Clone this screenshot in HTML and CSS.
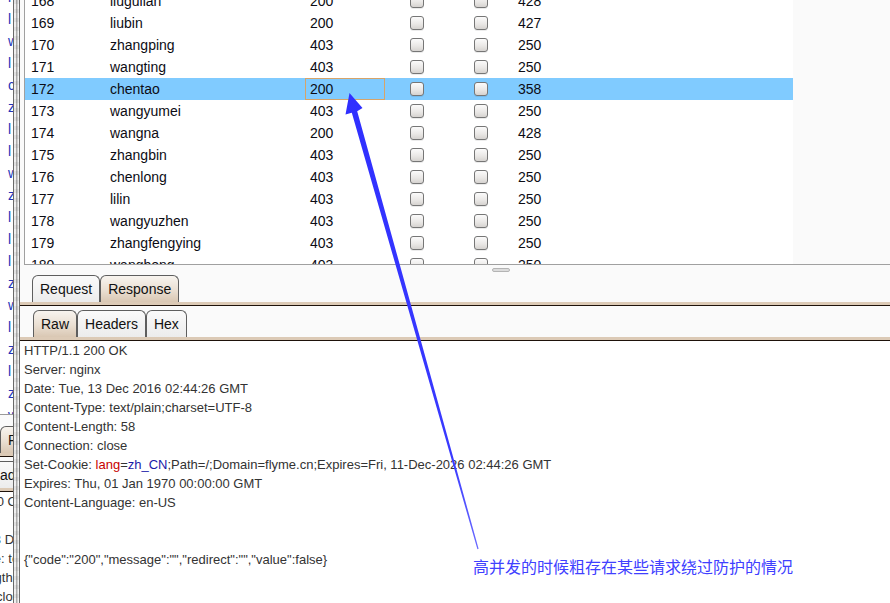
FILE: index.html
```html
<!DOCTYPE html>
<html>
<head>
<meta charset="utf-8">
<link rel="stylesheet" href="styles.css">
</head>
<body>
<div class="app">
  <div class="side">
    <div class="side-list">
      <div class="sl">l</div><div class="sl">l</div><div class="sl">w</div><div class="sl">l</div>
      <div class="sl">c</div><div class="sl">z</div><div class="sl">l</div><div class="sl">l</div>
      <div class="sl">w</div><div class="sl">z</div><div class="sl">l</div><div class="sl">l</div>
      <div class="sl">l</div><div class="sl">z</div><div class="sl">w</div><div class="sl">l</div>
      <div class="sl">z</div><div class="sl">l</div><div class="sl">z</div><div class="sl">w</div>
    </div>
    <div class="hsplit"></div>
    <div class="tabs side-tabs"><span class="tab sel">Request</span></div>
    <div class="bar"></div>
    <div class="tab-gap"></div>
    <div class="tabs side-tabs2"><span class="tab">Headers</span></div>
    <div class="bar"></div>
    <div class="side-text">
      <div class="ln">HTTP/1.1 200 OK</div>
      <div class="ln">Server: nginx</div>
      <div class="ln">Date: Tue, 13 Dec 2016 02:44:26 GMT</div>
      <div class="ln">Content-Type: text/plain;charset=UTF-8</div>
      <div class="ln">Content-Length: 58</div>
      <div class="ln">Connection: close</div>
    </div>
  </div>
  <div class="splitter"></div>
  <div class="main">
    <div class="table-wrap">
      <div class="table">
        <div class="row"><span class="c-num">168</span><span class="c-name">liuguilan</span><span class="c-st">200</span><span class="c-cb"><i class="cb"></i></span><span class="c-cb"><i class="cb"></i></span><span class="c-len">428</span></div>
        <div class="row"><span class="c-num">169</span><span class="c-name">liubin</span><span class="c-st">200</span><span class="c-cb"><i class="cb"></i></span><span class="c-cb"><i class="cb"></i></span><span class="c-len">427</span></div>
        <div class="row"><span class="c-num">170</span><span class="c-name">zhangping</span><span class="c-st">403</span><span class="c-cb"><i class="cb"></i></span><span class="c-cb"><i class="cb"></i></span><span class="c-len">250</span></div>
        <div class="row"><span class="c-num">171</span><span class="c-name">wangting</span><span class="c-st">403</span><span class="c-cb"><i class="cb"></i></span><span class="c-cb"><i class="cb"></i></span><span class="c-len">250</span></div>
        <div class="row sel"><span class="c-num">172</span><span class="c-name">chentao</span><span class="c-st focus">200</span><span class="c-cb"><i class="cb"></i></span><span class="c-cb"><i class="cb"></i></span><span class="c-len">358</span></div>
        <div class="row"><span class="c-num">173</span><span class="c-name">wangyumei</span><span class="c-st">403</span><span class="c-cb"><i class="cb"></i></span><span class="c-cb"><i class="cb"></i></span><span class="c-len">250</span></div>
        <div class="row"><span class="c-num">174</span><span class="c-name">wangna</span><span class="c-st">200</span><span class="c-cb"><i class="cb"></i></span><span class="c-cb"><i class="cb"></i></span><span class="c-len">428</span></div>
        <div class="row"><span class="c-num">175</span><span class="c-name">zhangbin</span><span class="c-st">403</span><span class="c-cb"><i class="cb"></i></span><span class="c-cb"><i class="cb"></i></span><span class="c-len">250</span></div>
        <div class="row"><span class="c-num">176</span><span class="c-name">chenlong</span><span class="c-st">403</span><span class="c-cb"><i class="cb"></i></span><span class="c-cb"><i class="cb"></i></span><span class="c-len">250</span></div>
        <div class="row"><span class="c-num">177</span><span class="c-name">lilin</span><span class="c-st">403</span><span class="c-cb"><i class="cb"></i></span><span class="c-cb"><i class="cb"></i></span><span class="c-len">250</span></div>
        <div class="row"><span class="c-num">178</span><span class="c-name">wangyuzhen</span><span class="c-st">403</span><span class="c-cb"><i class="cb"></i></span><span class="c-cb"><i class="cb"></i></span><span class="c-len">250</span></div>
        <div class="row"><span class="c-num">179</span><span class="c-name">zhangfengying</span><span class="c-st">403</span><span class="c-cb"><i class="cb"></i></span><span class="c-cb"><i class="cb"></i></span><span class="c-len">250</span></div>
        <div class="row"><span class="c-num">180</span><span class="c-name">wanghong</span><span class="c-st">403</span><span class="c-cb"><i class="cb"></i></span><span class="c-cb"><i class="cb"></i></span><span class="c-len">250</span></div>
      </div>
    </div>
    <div class="hsplit"><span class="grip"></span></div>
    <div class="tabs tabs1"><span class="tab">Request</span><span class="tab sel">Response</span></div>
    <div class="bar"></div>
    <div class="tab-gap"></div>
    <div class="tabs tabs2"><span class="tab sel">Raw</span><span class="tab">Headers</span><span class="tab">Hex</span></div>
    <div class="bar"></div>
    <div class="resp">
      <div class="ln">HTTP/1.1 200 OK</div>
      <div class="ln">Server: nginx</div>
      <div class="ln">Date: Tue, 13 Dec 2016 02:44:26 GMT</div>
      <div class="ln">Content-Type: text/plain;charset=UTF-8</div>
      <div class="ln">Content-Length: 58</div>
      <div class="ln">Connection: close</div>
      <div class="ln">Set-Cookie: <span class="ck">lang</span>=<span class="cv">zh_CN</span>;Path=/;Domain=flyme.cn;Expires=Fri, 11-Dec-2026 02:44:26 GMT</div>
      <div class="ln">Expires: Thu, 01 Jan 1970 00:00:00 GMT</div>
      <div class="ln">Content-Language: en-US</div>
      <div class="ln">&nbsp;</div>
      <div class="ln">&nbsp;</div>
      <div class="ln">{"code":"200","message":"","redirect":"","value":false}</div>
    </div>
  </div>
</div>
<svg class="arrow" width="890" height="603" viewBox="0 0 890 603">
  <defs>
    <linearGradient id="ag" x1="0" y1="0" x2="0" y2="1">
      <stop offset="0" stop-color="#2f2fff"/>
      <stop offset="0.8" stop-color="#3a3aff"/>
      <stop offset="1" stop-color="#6a6aff"/>
    </linearGradient>
  </defs>
  <polygon fill="url(#ag)" points="349.5,93 362.5,108 357.2,111.2 478.6,548.8 477.4,549.2 351.8,112.8 345.5,114.5"/>
</svg>
<div class="note">高并发的时候粗存在某些请求绕过防护的情况</div>
</body>
</html>
```
FILE: styles.css
```css
* { box-sizing: border-box; }
html, body {
  margin: 0;
  padding: 0;
  width: 890px;
  height: 603px;
  overflow: hidden;
  background: #fafafa;
  font-family: "Liberation Sans", Arial, sans-serif;
}
.app {
  display: flex;
  width: 890px;
  height: 603px;
}

/* left clipped pane */
.side {
  width: 13px;
  flex: none;
  overflow: hidden;
  display: flex;
  flex-direction: column;
  background: #fafafa;
}
.side-list {
  height: 415px;
  flex: none;
  background: #fff;
  border-bottom: 1px solid #9a9a9a;
  overflow: hidden;
}
.sl {
  height: 22px;
  line-height: 22px;
  font-size: 14px;
  padding-left: 8px;
  color: #2233b8;
}
.sl:first-child { margin-top: -14px; }
.side-tabs { padding-left: 0; }
.side-tabs2 { margin-left: -26px; padding-left: 0; }
.side .hsplit { height: 11px; }
.side-text {
  flex: 1;
  background: #fff;
  font-size: 13px;
  line-height: 19px;
  color: #333;
  margin-left: -77px;
  width: 90px;
  overflow: hidden;
}
.ln { white-space: pre; height: 19px; }

/* vertical splitter */
.splitter {
  width: 7px;
  flex: none;
  border-left: 1px solid #6a6a6a;
  border-right: 1px solid #6a6a6a;
  background:
    repeating-linear-gradient(to bottom, rgba(0,0,0,0.06) 0 4px, rgba(0,0,0,0) 4px 9px),
    linear-gradient(to right, #e6e6e6, #ffffff 25%, #9c9c9c 55%, #ffffff 85%, #e0e0e0);
}

/* main pane */
.main {
  flex: 1;
  display: flex;
  flex-direction: column;
  background: #fafafa;
  min-width: 0;
}
.table-wrap {
  height: 265px;
  flex: none;
  margin-left: 4px;
  border-left: 1px solid #a0a0a0;
  border-bottom: 1px solid #a0a0a0;
  overflow: hidden;
  background: #fafafa;
}
.table {
  width: 768px;
  background: #fff;
  margin-top: -10px;
}
.row {
  display: grid;
  grid-template-columns: 80px 200px 80px 64px 64px 280px;
  height: 22px;
  line-height: 22px;
  font-size: 14px;
  color: #0c0c14;
}
.row.sel { background: #80cbff; }
.c-num { padding-left: 6px; }
.c-name, .c-st, .c-len { padding-left: 5px; white-space: nowrap; }
.c-st.focus { box-shadow: inset 0 0 0 1px #d6a46a; }
.c-cb {
  display: flex;
  align-items: center;
  justify-content: center;
}
.cb {
  display: block;
  width: 14px;
  height: 14px;
  border: 1px solid #767676;
  border-radius: 3px;
  background: linear-gradient(#fbfbfb, #e9e7e5 60%, #d6d3d0);
  box-shadow: 0 1px 0 rgba(0,0,0,0.08);
}

.hsplit {
  height: 10px;
  flex: none;
  background: #fafafa;
}
.grip {
  display: block;
  width: 18px;
  height: 4px;
  margin: 3px 0 0 472px;
  border: 1px solid #b4b4b4;
  border-radius: 2px;
  background: #dcdcdc;
}

.tabs {
  display: flex;
  height: 27px;
  flex: none;
  align-items: flex-end;
}
.tabs1 { padding-left: 12px; }
.tabs2 { padding-left: 13px; }
.tab {
  height: 27px;
  line-height: 26px;
  font-size: 14px;
  color: #111;
  padding: 0 7px;
  border: 1px solid #5e5e5e;
  border-bottom: none;
  border-radius: 6px 6px 0 0;
  background: linear-gradient(#fafafa, #ececec);
  white-space: nowrap;
}
.tab.sel {
  background: linear-gradient(#f8f4ef, #eadfd2 55%, #d9c7b3);
}
.bar {
  height: 4px;
  flex: none;
  background: #dccab6;
  border-bottom: 1px solid #1e120a;
}
.tab-gap {
  height: 4px;
  flex: none;
  background: #fafafa;
}

.resp {
  flex: 1;
  background: #fff;
  padding-left: 4px;
  font-size: 13px;
  line-height: 19px;
  color: #333;
}
.ck { color: #c80000; }
.cv { color: #1a1aa8; }

/* annotation overlay */
.arrow {
  position: absolute;
  left: 0;
  top: 0;
  pointer-events: none;
}
.note {
  position: absolute;
  left: 473px;
  top: 557px;
  font-family: "Noto Sans CJK SC", sans-serif;
  font-size: 16px;
  line-height: 18px;
  color: #4040ff;
  white-space: nowrap;
}
```
